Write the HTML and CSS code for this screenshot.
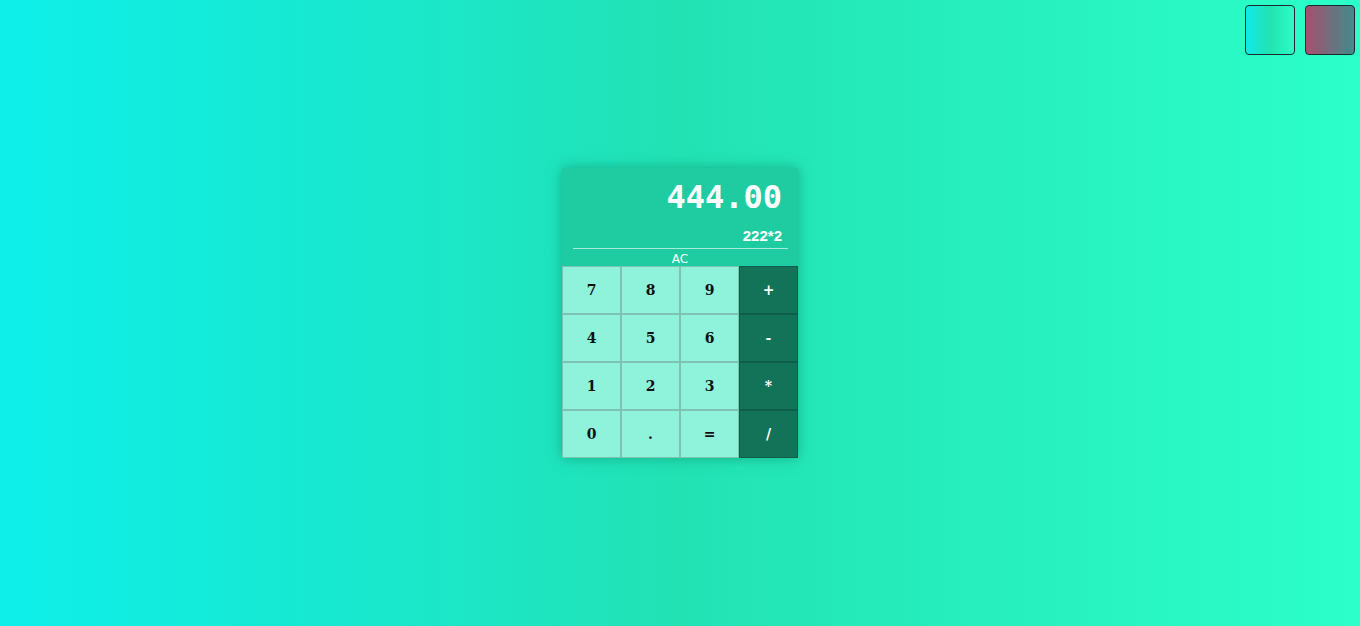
FILE: index.html
```html
<!DOCTYPE html>
<html>
<head>
<meta charset="utf-8">
<link rel="stylesheet" href="styles.css">
</head>
<body>
<div class="themes">
  <button class="swatch swatch-green"></button>
  <button class="swatch swatch-rose"></button>
</div>
<main class="calc">
  <div class="display">
    <div class="result">444.00</div>
    <div class="expr">222*2</div>
  </div>
  <button class="clear">AC</button>
  <div class="keys">
    <button class="key">7</button>
    <button class="key">8</button>
    <button class="key">9</button>
    <button class="key op">+</button>
    <button class="key">4</button>
    <button class="key">5</button>
    <button class="key">6</button>
    <button class="key op">-</button>
    <button class="key">1</button>
    <button class="key">2</button>
    <button class="key">3</button>
    <button class="key op">*</button>
    <button class="key">0</button>
    <button class="key">.</button>
    <button class="key">=</button>
    <button class="key op">/</button>
  </div>
</main>
</body>
</html>
```
FILE: styles.css
```css
* { box-sizing: border-box; }
html, body { margin: 0; height: 100%; }
body {
  background: linear-gradient(to right, #0eefea 0%, #22e2b4 50%, #2cffc9 100%);
  display: flex;
  align-items: center;
  justify-content: center;
  font-family: "DejaVu Sans", sans-serif;
}
.themes {
  position: fixed;
  top: 5px;
  right: 5px;
  display: flex;
  gap: 10px;
}
.swatch {
  width: 50px;
  height: 50px;
  border: 1px solid #1b2a28;
  border-radius: 4px;
  padding: 0;
}
.swatch-green { background: linear-gradient(to right, #10eaea, #22e3b0 50%, #2cfcc8); }
.swatch-rose { background: linear-gradient(to right, #a84f6e, #3f8c8c); }
.calc {
  width: 236px;
  background: #1fcca1;
  box-shadow: 0 0 12px rgba(10, 120, 85, 0.5);
  display: flex;
  flex-direction: column;
}
.display {
  padding: 11px 6px 4px 0;
  margin: 0 10px 0 11px;
  border-bottom: 1px solid #a6ecd9;
  text-align: right;
  color: #fff;
}
.result {
  font-family: "DejaVu Sans Mono", monospace;
  font-weight: bold;
  font-size: 32px;
  line-height: 37px;
}
.expr {
  font-family: "Liberation Sans", Arial, sans-serif;
  font-weight: bold;
  font-size: 15px;
  line-height: 17px;
  margin-top: 11px;
}
.clear {
  background: none;
  border: none;
  color: #fff;
  font-family: "DejaVu Sans", sans-serif;
  font-size: 12px;
  height: 17px;
  line-height: 18px;
  padding: 1px 0 0;
}
.keys {
  display: grid;
  grid-template-columns: repeat(4, 59px);
  grid-auto-rows: 48px;
}
.key {
  background: #8ff2da;
  border: 1px solid #7ec2b1;
  font-family: "DejaVu Serif", serif;
  font-weight: bold;
  font-size: 14px;
  color: #111;
  padding: 0;
}
.key.op {
  background: #127358;
  border-color: #0f5c47;
  color: #fff;
}
```
